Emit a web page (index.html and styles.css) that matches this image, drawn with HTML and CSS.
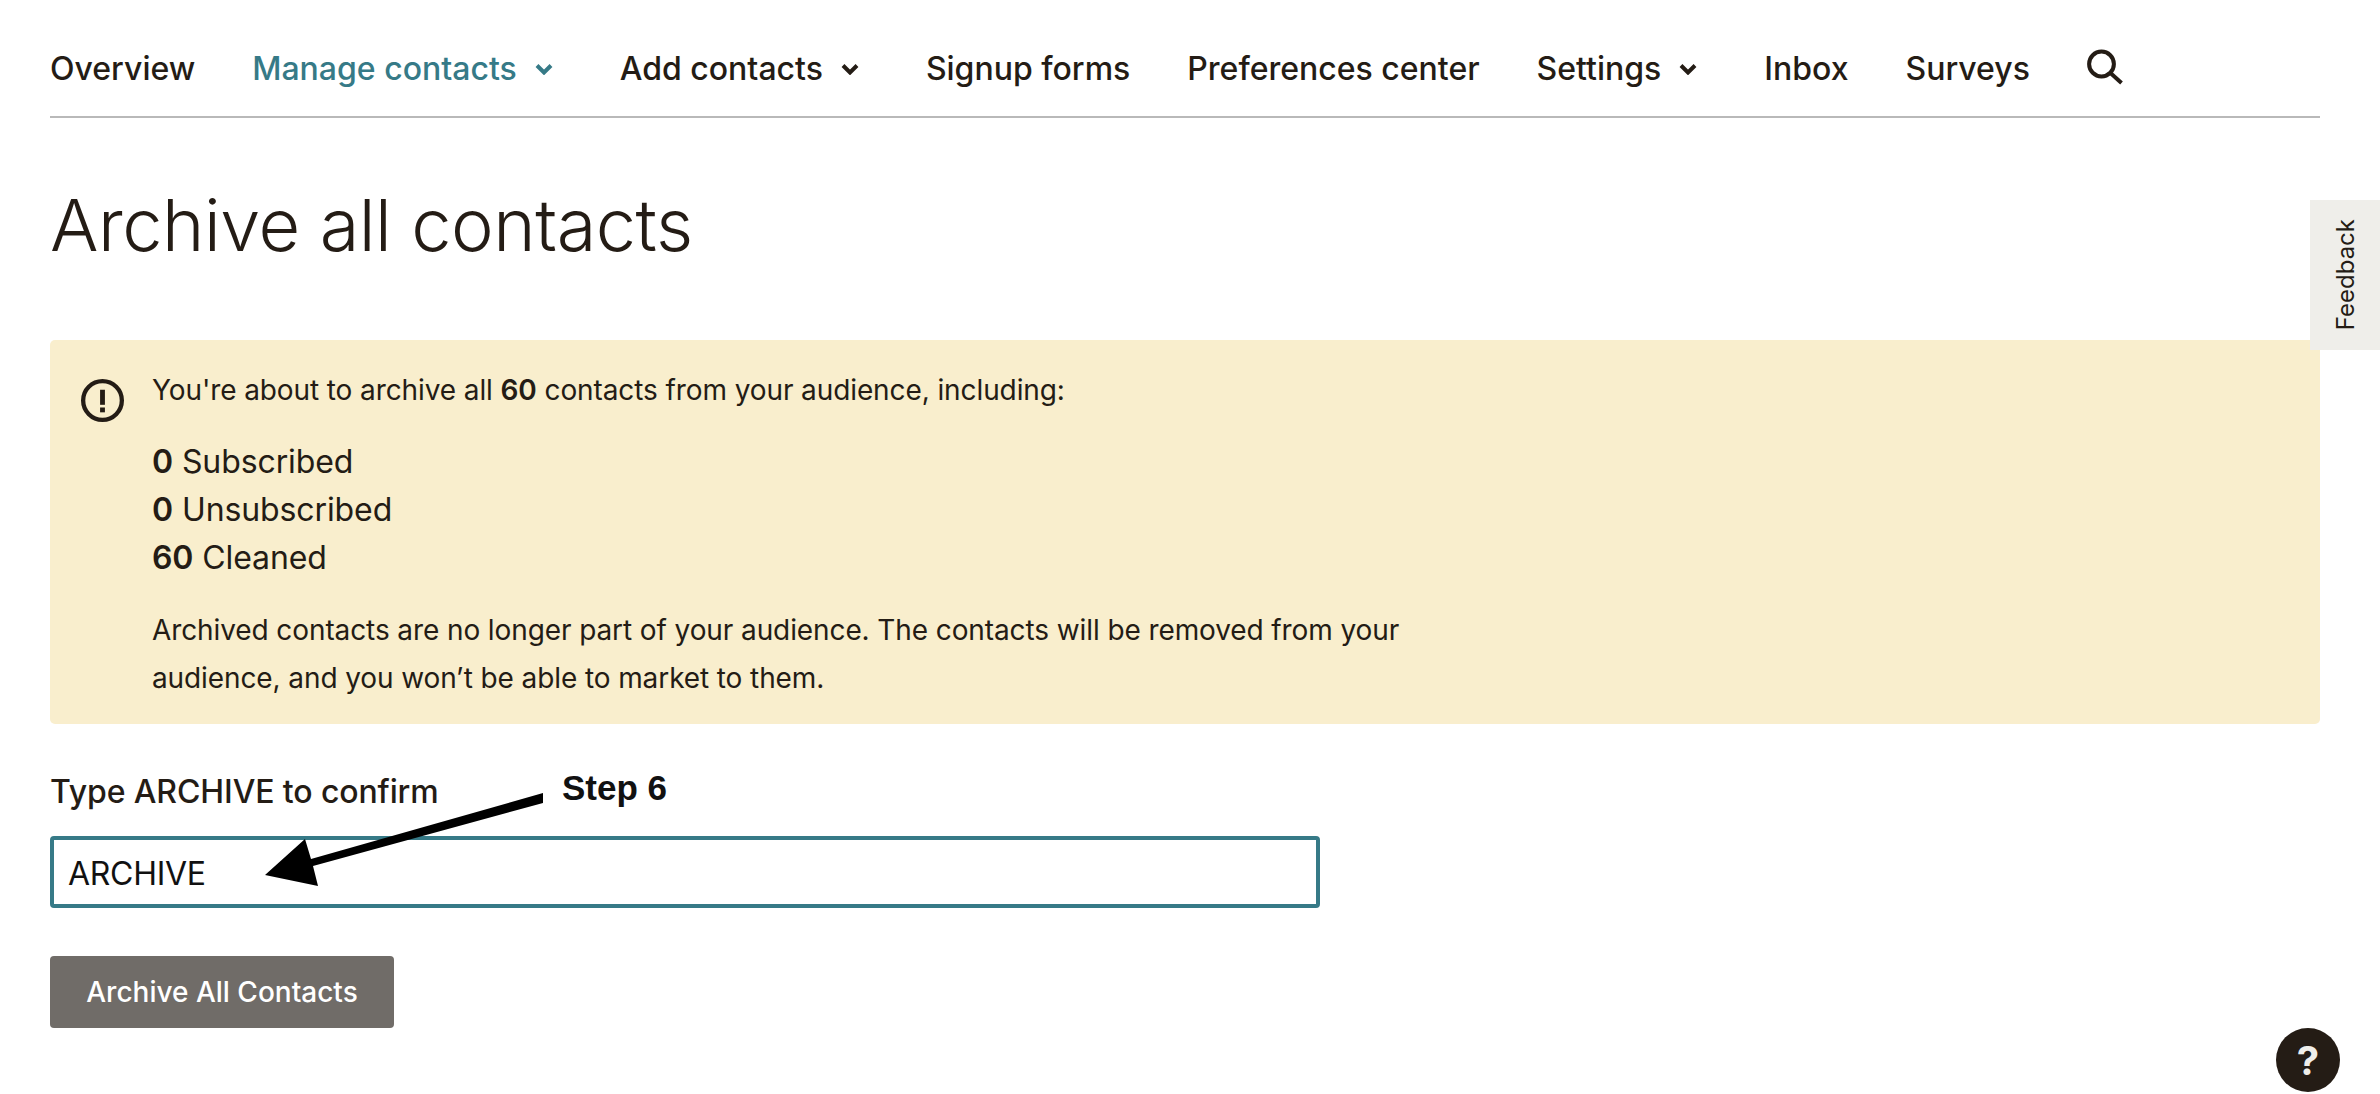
FILE: index.html
```html
<!DOCTYPE html>
<html lang="en">
<head>
<meta charset="utf-8">
<title>Archive all contacts</title>
<link rel="stylesheet" href="styles.css">
</head>
<body>
<div class="page">
  <nav class="nav">
    <a class="nav-item">Overview</a>
    <a class="nav-item active">Manage contacts<svg class="chev" viewBox="0 0 18 12"><path d="M2 2.500 9 9.500 16 2.500"/></svg></a>
    <a class="nav-item">Add contacts<svg class="chev" viewBox="0 0 18 12"><path d="M2 2.500 9 9.500 16 2.500"/></svg></a>
    <a class="nav-item">Signup forms</a>
    <a class="nav-item">Preferences center</a>
    <a class="nav-item">Settings<svg class="chev" viewBox="0 0 18 12"><path d="M2 2.500 9 9.500 16 2.500"/></svg></a>
    <a class="nav-item">Inbox</a>
    <a class="nav-item">Surveys</a>
    <svg class="search" viewBox="0 0 36 36"><circle cx="14.500" cy="15" r="12.400"/><path d="M24 24.500 34.500 34"/></svg>
  </nav>
  <h1 class="title">Archive all contacts</h1>
  <section class="banner">
    <svg class="alert" viewBox="0 0 40 40"><circle cx="20" cy="20" r="18"/><rect class="mark" x="17.750" y="10" width="4.500" height="14"/><rect class="mark" x="17.750" y="26.500" width="4.500" height="4.500"/></svg>
    <div class="banner-body">
      <p class="lead">You're about to archive all <b>60</b> contacts from your audience, including:</p>
      <ul class="counts">
        <li><b>0</b> Subscribed</li>
        <li><b>0</b> Unsubscribed</li>
        <li><b>60</b> Cleaned</li>
      </ul>
      <p class="note">Archived contacts are no longer part of your audience. The contacts will be removed from your<br>audience, and you won’t be able to market to them.</p>
    </div>
  </section>
  <form class="form">
    <label class="label" for="confirm">Type ARCHIVE to confirm</label>
    <input class="field" id="confirm" type="text" value="ARCHIVE">
    <button class="btn" type="button">Archive All Contacts</button>
  </form>
</div>
<div class="step">Step 6</div>
<svg class="arrow" viewBox="0 0 300 60" width="300" height="60"><polygon points="283,-47 51,19 45,-1 5,35 58,46 53,26 283,-37"/></svg>
<div class="feedback"><span>Feedback</span></div>
<div class="help">?</div>
</body>
</html>
```
FILE: styles.css
```css
* { box-sizing: border-box; }
html, body { margin: 0; height: 100%; }
body {
  background: #fff;
  color: #241c15;
  font-family: Inter, "Liberation Sans", sans-serif;
  position: relative;
  overflow: hidden;
}
.page { padding: 0 60px 0 50px; }
.nav {
  display: flex;
  align-items: center;
  gap: 57px;
  height: 118px;
  padding-top: 21px;
  border-bottom: 2px solid #b9b9b9;
  font-size: 32px;
  font-weight: 500;
}
.nav-item { display: flex; align-items: center; white-space: nowrap; }
.nav-item.active { color: #367a87; }
.chev { width: 18px; height: 12px; margin-left: 18px; margin-right: 10px; fill: none; stroke: currentColor; stroke-width: 4; }
.search { width: 36px; height: 36px; margin-top: -4px; margin-left: 0; fill: none; stroke: #241c15; stroke-width: 4; }
.title {
  margin: 0;
  padding-top: 65px;
  height: 222px;
  font-size: 72px;
  line-height: 84px;
  font-weight: 340;
  letter-spacing: -0.45px;
}
.banner {
  display: flex;
  height: 384px;
  padding: 26px 24px 0 31px;
  gap: 28px;
  background: #f9eecd;
  border-radius: 5px;
}
.alert { flex: none; width: 43px; height: 43px; margin-top: 13px; fill: none; stroke: #241c15; stroke-width: 4; }
.alert .mark { fill: #241c15; stroke: none; }
.banner-body { font-size: 28px; line-height: 48px; letter-spacing: -0.1px; }
.banner-body p { margin: 0; }
.banner-body b { font-weight: 600; }
.counts { list-style: none; margin: 24px 0; padding: 0; font-size: 32px; line-height: 48px; }
.form { display: flex; flex-direction: column; align-items: flex-start; }
.label { margin-top: 44px; font-size: 32px; line-height: 48px; font-weight: 500; letter-spacing: -0.12px; }
.field {
  width: 1270px;
  height: 72px;
  margin-top: 20px;
  padding: 3px 14px 0;
  border: 4px solid #367a87;
  border-radius: 4px;
  font: 400 32px Inter, sans-serif;
  letter-spacing: -0.3px;
  color: #111;
  outline: none;
}
.btn {
  width: 344px;
  height: 72px;
  margin-top: 48px;
  border: 0;
  border-radius: 4px;
  background: #706c68;
  color: #fff;
  font: 500 28px Inter, sans-serif;
}
.step { position: absolute; left: 562px; top: 768px; font: 700 35px "Liberation Sans", sans-serif; color: #111; }
.arrow { position: absolute; left: 260px; top: 840px; overflow: visible; fill: #000; }
.feedback {
  position: absolute; right: 0; top: 200px; width: 70px; height: 150px;
  background: #efeeea; display: flex; align-items: center; justify-content: center;
}
.feedback span { writing-mode: vertical-rl; transform: rotate(180deg); font-size: 24px; }
.help {
  position: absolute; left: 2276px; top: 1028px; width: 64px; height: 64px; border-radius: 50%;
  background: #241c15; color: #efeeea; display: flex; align-items: center; justify-content: center;
  font-size: 40px; font-weight: 700;
}
```
